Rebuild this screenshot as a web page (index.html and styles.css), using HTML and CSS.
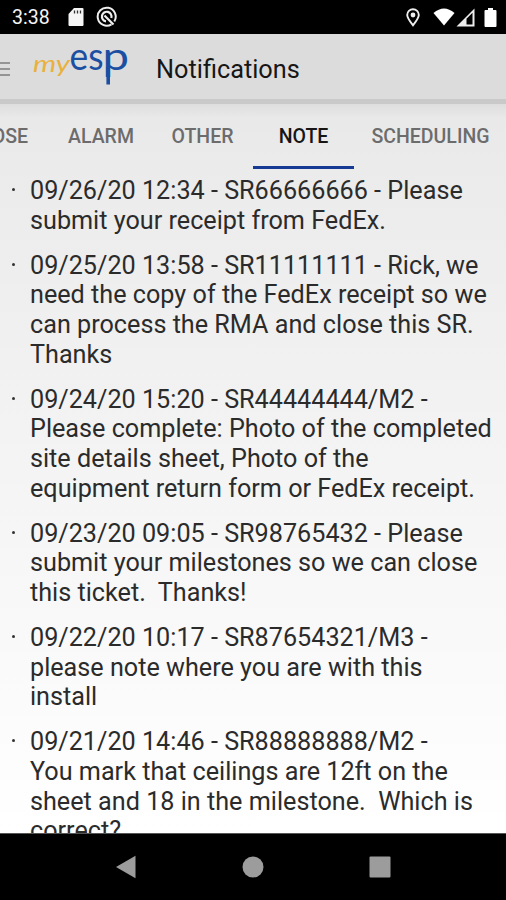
FILE: index.html
```
<!DOCTYPE html>
<html lang="en">
<head>
    <meta charset="UTF-8">
    <meta name="viewport" content="width=device-width, initial-scale=1.0">
    <title>myesp - Notifications</title>
    <link rel="stylesheet" href="styles.css">
</head>
<body>

    <div class="status-bar">
        <span class="clock">3:38</span>
        <svg class="sd-icon" width="16" height="20" viewBox="0 0 16 20">
            <path d="M6 1h8.500q1 0 1 1v16q0 1-1 1h-13q-1 0-1-1V7z" fill="#f5f5f5"/>
            <path d="M6.500 3.500v3M9.500 3.500v3M12.500 3.500v3" stroke="#333" stroke-width="1.300"/>
        </svg>
        <svg class="dnd-icon" width="22" height="22" viewBox="0 0 22 22" fill="none" stroke="#eee">
            <path d="M15.500 18.300A9 9 0 1 1 18.300 15.500" stroke-width="2"/>
            <path d="M10 15.300A4.800 4.800 0 1 1 15.300 12" stroke-width="2.200"/>
            <path d="M8.500 9.500l9 9" stroke-width="2.200"/>
        </svg>
        <svg class="pin-icon" width="14" height="19" viewBox="0 0 14 19" fill="none" stroke="#eee">
            <path d="M7 17.300C3.500 12.800 1.200 10 1.200 7a5.800 5.800 0 0 1 11.600 0c0 3-2.300 5.800-5.800 10.300z" stroke-width="1.900"/>
            <circle cx="7" cy="7" r="2.400" fill="#eee" stroke="none"/>
        </svg>
        <svg class="wifi-icon" width="22" height="18" viewBox="0 0 22 18">
            <path d="M0.500 5Q11-4 21.500 5L11 17.500z" fill="#fff"/>
        </svg>
        <svg class="signal-icon" width="19" height="19" viewBox="0 0 19 19">
            <path d="M0.500 18.500L18.500 0.500v18z" fill="#eee"/>
            <path d="M10.500 10.800l6-6v11.700h-6z" fill="#000"/>
        </svg>
        <svg class="battery-icon" width="13" height="19" viewBox="0 0 13 19">
            <path d="M4 0h5v2h2.500q1 0 1 1v15q0 1-1 1h-10q-1 0-1-1V3q0-1 1-1H4z" fill="#fff"/>
        </svg>
    </div>

    <div class="header">
        <div class="menu">
            <span></span>
            <span></span>
            <span></span>
        </div>
        <svg class="logo" width="98" height="44" viewBox="0 0 98 44">
            <text class="logo-my" x="1" y="25" textLength="37" lengthAdjust="spacingAndGlyphs">my</text>
            <text class="logo-esp" x="37.500" y="22.500" textLength="34" lengthAdjust="spacingAndGlyphs">es</text>
            <text class="logo-esp" x="70.600" y="22.500" textLength="26.500" lengthAdjust="spacingAndGlyphs">p</text>
            <path d="M76.200 20v17.500" stroke="#1b4fa2" stroke-width="3.600"/>
        </svg>
        <h1>Notifications</h1>
    </div>

    <div class="content">
        <div class="tabs">
            <div class="tab tab-close">CLOSE</div>
            <div class="tab tab-alarm">ALARM</div>
            <div class="tab tab-other">OTHER</div>
            <div class="tab tab-note active">NOTE</div>
            <div class="tab tab-scheduling">SCHEDULING</div>
        </div>

        <ul class="notes">
            <li>09/26/20 12:34 - SR66666666 - Please
submit your receipt from FedEx.</li>
            <li>09/25/20 13:58 - SR11111111 - Rick, we
need the copy of the FedEx receipt so we
can process the RMA and close this SR.
Thanks</li>
            <li>09/24/20 15:20 - SR44444444/M2 -
Please complete: Photo of the completed
site details sheet, Photo of the
equipment return form or FedEx receipt.</li>
            <li>09/23/20 09:05 - SR98765432 - Please
submit your milestones so we can close
this ticket.  Thanks!</li>
            <li>09/22/20 10:17 - SR87654321/M3 -
please note where you are with this
install</li>
            <li>09/21/20 14:46 - SR88888888/M2 -
You mark that ceilings are 12ft on the
sheet and 18 in the milestone.  Which is
correct?</li>
        </ul>
    </div>

    <div class="nav-bar">
        <svg width="22" height="24" viewBox="0 0 22 24"><path d="M1 12L20.500 0.800v22.400z" fill="#9c9c9c"/></svg>
        <svg width="22" height="22" viewBox="0 0 22 22"><circle cx="11" cy="11" r="10.500" fill="#9c9c9c"/></svg>
        <svg width="22" height="22" viewBox="0 0 22 22"><rect x="0.500" y="0.500" width="21" height="21" rx="1" fill="#9c9c9c"/></svg>
    </div>

</body>
</html>
```
FILE: styles.css
```
* {
    box-sizing: border-box;
}

body {
    margin: 0;
    height: 900px;
    display: flex;
    flex-direction: column;
    overflow: hidden;
    font-family: Roboto, sans-serif;
    background-color: #000;
}

.status-bar {
    height: 34px;
    flex-shrink: 0;
    display: flex;
    align-items: center;
    padding: 0 9px 0 12px;
    background-color: #000;
    color: #f5f5f5;
}

.clock {
    width: 56px;
    font-size: 19.5px;
    line-height: 34px;
    padding-top: 2px;
}

.dnd-icon {
    margin-left: 12px;
}

.pin-icon {
    margin-left: auto;
}

.wifi-icon {
    margin-left: 13px;
}

.signal-icon {
    margin-left: 1px;
}

.battery-icon {
    margin-left: 9px;
}

/* Header */
.header {
    height: 70px;
    flex-shrink: 0;
    display: flex;
    align-items: flex-start;
    background-color: #dcdcdc;
    border-bottom: 5px solid #c9c9c9;
}

.menu {
    width: 10px;
    margin: 28px 22px 0 0;
    display: flex;
    flex-direction: column;
    gap: 4px;
}

.menu span {
    height: 2px;
    background-color: #949494;
}

.logo {
    margin-top: 13px;
    overflow: visible;
}

.logo-my {
    font-family: Lato, sans-serif;
    font-style: italic;
    font-size: 24px;
    fill: #e9b13c;
}

.logo-esp {
    font-family: Lato, sans-serif;
    font-size: 38px;
    fill: #1b4fa2;
}

h1 {
    margin: 0 0 0 26px;
    font-size: 25.3px;
    font-weight: 400;
    line-height: 72px;
    color: #161616;
}

/* Tabs and list */
.content {
    height: 729px;
    flex-shrink: 0;
    overflow: hidden;
    background: linear-gradient(#dedede 0, #e9e9e9 14px, #ebebeb 60px, #fff 100%);
}

.tabs {
    height: 65px;
    display: flex;
    margin-left: -53px;
    font-size: 19.5px;
    font-weight: 500;
    line-height: 65px;
    color: #6c6c6c;
}

.tab {
    flex-shrink: 0;
    text-align: center;
    white-space: nowrap;
}

.tab-close {
    width: 103px;
}

.tab-alarm {
    width: 102px;
}

.tab-other {
    width: 101px;
}

.tab-note {
    width: 101px;
}

.tab-scheduling {
    width: 153px;
}

.tab.active {
    color: #161616;
    border-bottom: 3px solid #173a94;
}

.notes {
    list-style: none;
    margin: 0;
    padding: 7px 0 0;
}

.notes li {
    display: flex;
    margin-bottom: 15.6px;
    font-size: 25.2px;
    line-height: 29.6px;
    white-space: pre;
    color: #2b2b2b;
}

.notes li::before {
    content: "";
    width: 3px;
    height: 3px;
    flex-shrink: 0;
    margin: 12px 15px 0 12px;
    border-radius: 50%;
    background-color: #333;
}

/* Android buttons */
.nav-bar {
    flex: 1;
    display: flex;
    align-items: center;
    justify-content: space-between;
    padding: 0 115px;
    border-top: 1px solid #555;
    background-color: #000;
}
```
